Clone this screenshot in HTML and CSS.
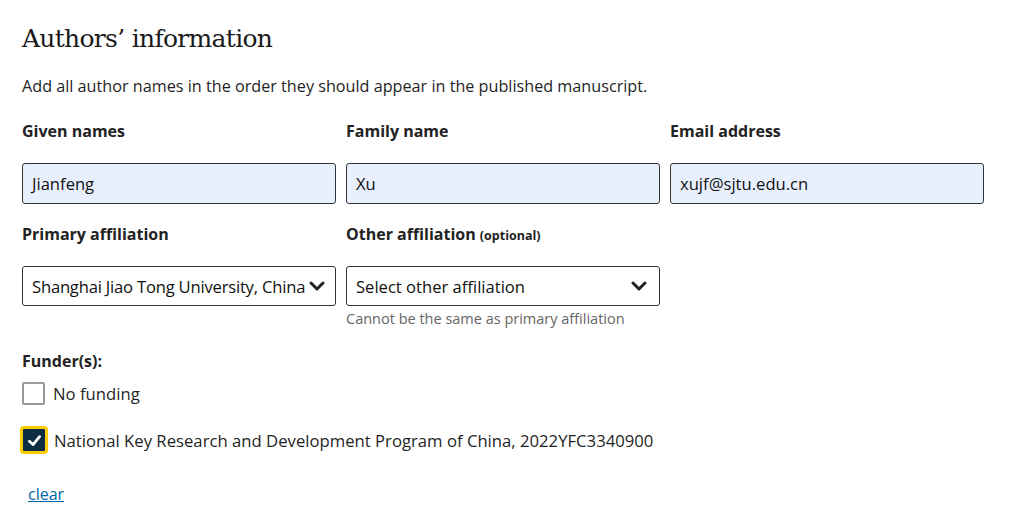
FILE: index.html
```html
<!DOCTYPE html>
<html lang="en">
<head>
<meta charset="utf-8">
<title>Authors' information</title>
<link rel="stylesheet" href="styles.css">
</head>
<body>
<section class="form">
  <h2 class="title">Authors’ information</h2>
  <p class="intro">Add all author names in the order they should appear in the published manuscript.</p>

  <div class="grid">
    <div class="field">
      <label class="label">Given names</label>
      <div class="input filled">Jianfeng</div>
    </div>
    <div class="field">
      <label class="label">Family name</label>
      <div class="input filled">Xu</div>
    </div>
    <div class="field">
      <label class="label">Email address</label>
      <div class="input filled">xujf@sjtu.edu.cn</div>
    </div>
  </div>

  <div class="grid row2">
    <div class="field">
      <label class="label">Primary affiliation</label>
      <div class="input select tight"><span class="sel-text">Shanghai Jiao Tong University, China</span>
        <svg class="chev" viewBox="0 0 16 10" width="16" height="10"><path d="M2 2 L8 8 L14 2" fill="none" stroke="#222" stroke-width="3" stroke-linecap="round" stroke-linejoin="round"/></svg>
      </div>
    </div>
    <div class="field">
      <label class="label">Other affiliation <span class="opt">(optional)</span></label>
      <div class="input select"><span class="sel-text">Select other affiliation</span>
        <svg class="chev" viewBox="0 0 16 10" width="16" height="10"><path d="M2 2 L8 8 L14 2" fill="none" stroke="#222" stroke-width="3" stroke-linecap="round" stroke-linejoin="round"/></svg>
      </div>
      <div class="hint">Cannot be the same as primary affiliation</div>
    </div>
  </div>

  <div class="funders">
    <div class="label">Funder(s):</div>
    <div class="check">
      <span class="box"></span>
      <span class="check-text">No funding</span>
    </div>
    <div class="check checked">
      <span class="box on">
        <svg viewBox="0 0 16 16" width="17" height="17"><path d="M3.2 8.6 L6.6 11.8 L12.8 4.4" fill="none" stroke="#fff" stroke-width="2.6" stroke-linecap="round" stroke-linejoin="round"/></svg>
      </span>
      <span class="check-text">National Key Research and Development Program of China, 2022YFC3340900</span>
    </div>
  </div>

  <a class="clear" href="#">clear</a>
</section>
</body>
</html>
```

FILE: styles.css
```css
* { box-sizing: border-box; }
html, body { margin: 0; padding: 0; background: #fff; }
body {
  font-family: "Open Sans", "Noto Sans", sans-serif;
  color: #222;
  font-size: 16px;
}
.form {
  padding: 21px 22px 0 22px;
  display: flex;
  flex-direction: column;
}
.title {
  font-family: "DejaVu Serif", serif;
  font-weight: normal;
  font-size: 25px;
  letter-spacing: -0.7px;
  line-height: 36px;
  margin: 0;
  color: #1a1a1a;
}
.intro {
  margin: 17px 0 0 0;
  line-height: 24px;
  font-size: 16.2px;
  color: #1f1f1f;
}
.grid {
  display: grid;
  grid-template-columns: 314px 314px 314px;
  column-gap: 10px;
  margin-top: 22px;
}
.grid.row2 { margin-top: 19px; }
.field { display: flex; flex-direction: column; }
.label {
  display: block;
  height: 22px;
  font-weight: 700;
  font-size: 16px;
  line-height: 22px;
  color: #222;
}
.opt { font-size: 12.5px; font-weight: 700; line-height: 1; }
.input {
  margin-top: 21px;
  height: 41px;
  border: 1px solid #333;
  border-radius: 3px;
  padding: 0 9px;
  display: flex;
  align-items: center;
  font-size: 16.6px;
  color: #111;
}
.input.filled { background: #e8f0fe; }
.select {
  margin-top: 21px;
  height: 40px;
  justify-content: space-between;
  padding-right: 12px;
}
.select.tight { padding-right: 10px; }
.sel-text { white-space: nowrap; overflow: hidden; }
.select.tight .sel-text { letter-spacing: -0.2px; }
.chev { flex: none; margin-left: 1px; }
.hint {
  margin-top: 3px;
  font-size: 14.5px;
  line-height: 20px;
  color: #666;
}
.funders {
  margin-top: 21px;
  display: flex;
  flex-direction: column;
}
.check {
  display: flex;
  align-items: center;
  gap: 8px;
  margin-top: 10px;
  font-size: 16.7px;
  color: #1f1f1f;
}
.check.checked { margin-top: 21px; margin-left: -2px; gap: 6px; }
.box {
  width: 23px;
  height: 23px;
  border: 2px solid #999;
  border-radius: 2px;
  background: #fff;
  flex: none;
}
.box.on {
  width: 28px;
  height: 28px;
  border: 3px solid #fc0;
  border-radius: 4px;
  background: #0c2d44;
  display: flex;
  align-items: center;
  justify-content: center;
}
.clear {
  margin-top: 29px;
  margin-left: 6px;
  align-self: flex-start;
  color: #0067a5;
  font-size: 16px;
  text-decoration: underline;
}
```
